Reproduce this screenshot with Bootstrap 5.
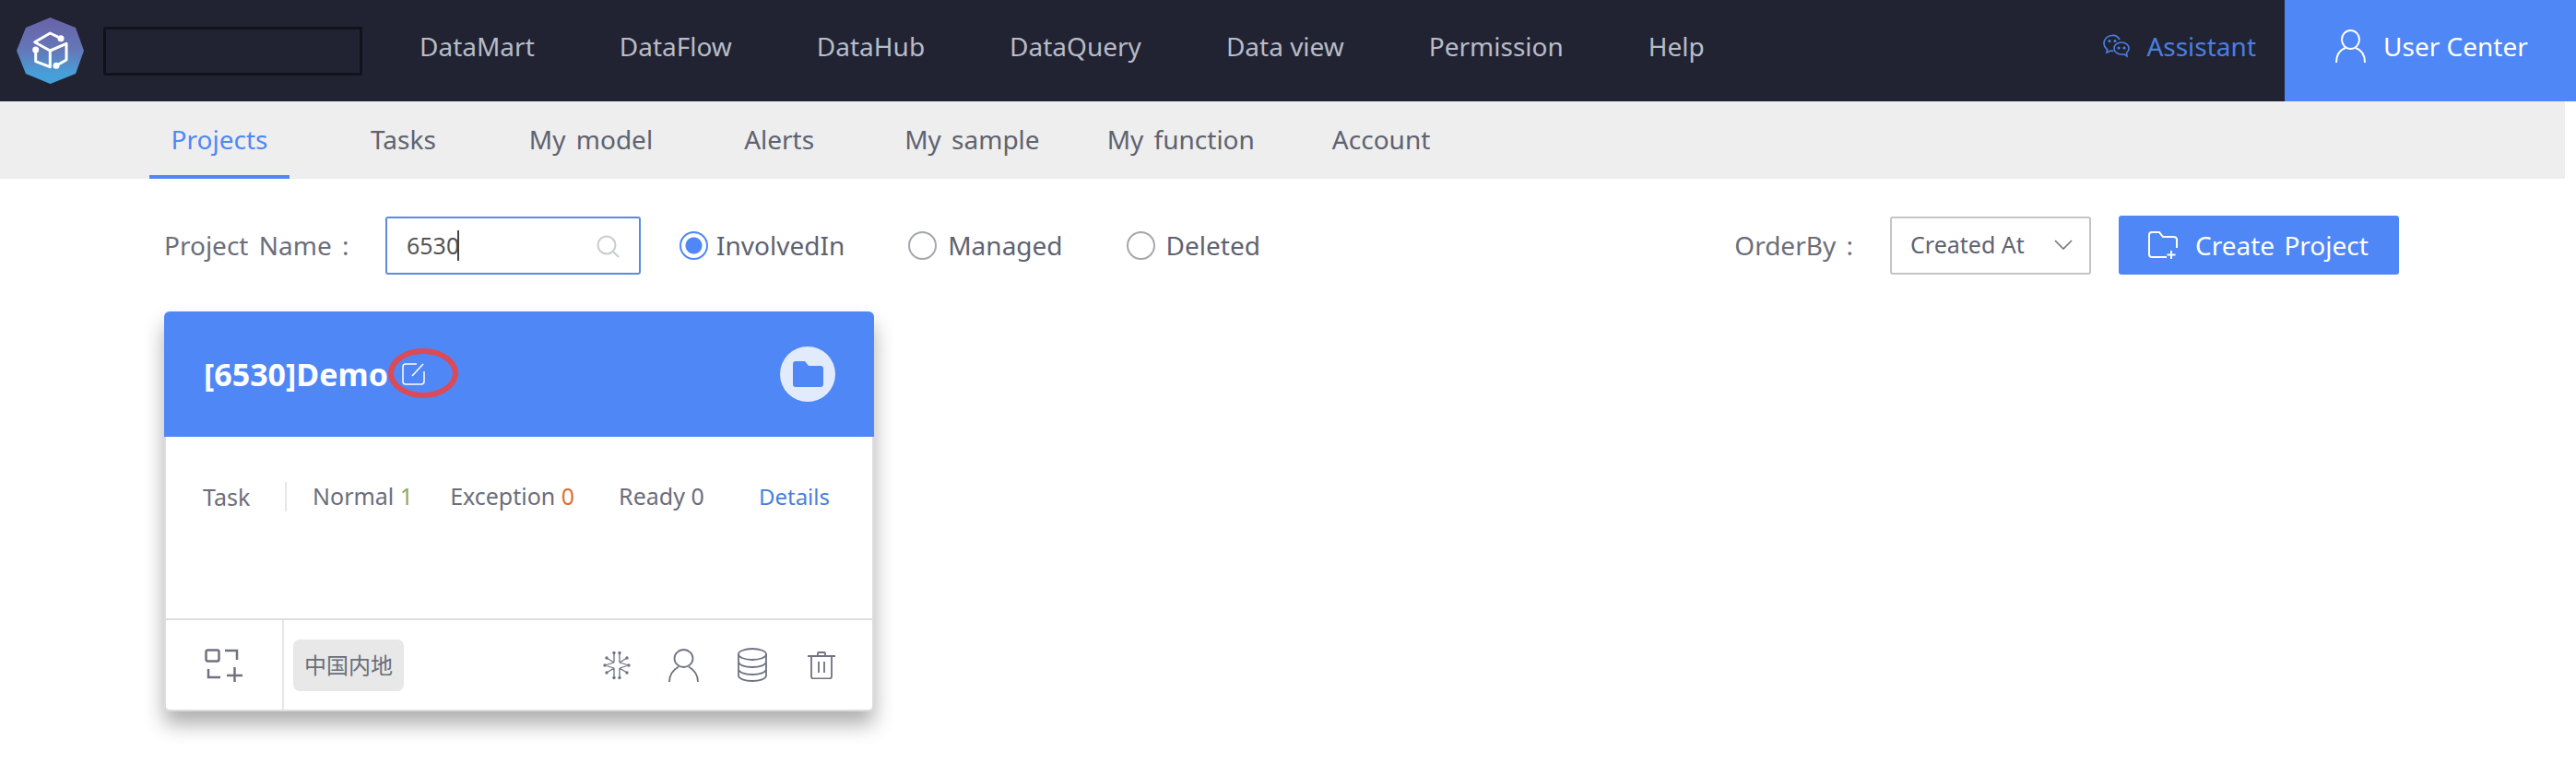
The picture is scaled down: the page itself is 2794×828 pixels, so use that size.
<!DOCTYPE html>
<html lang="en">
    <head>
        <meta charset="UTF-8">
        <title>Projects</title>
        <link href="https://cdn.jsdelivr.net/npm/bootstrap@5.3.3/dist/css/bootstrap.min.css" rel="stylesheet">
        <style>
            html, body { min-height: 100%; }
            body { font-family: "Noto Sans", "Noto Sans CJK SC", sans-serif; font-size: 28px; color: #6b6e7a; background: #fff; padding-bottom: 56px; }
            svg { display: block; flex: none; }

            .top-bar { height: 110px; background: #212332; }
            .logo-wrap { margin-left: 18px; }
            .logo-mask { width: 281px; height: 53px; margin-left: 21px; border: 3px solid #11121c; border-radius: 2px; }
            .main-menu { margin-left: 62px; margin-bottom: 10px; gap: 92px; }
            .main-menu .nav-link { padding: 0; color: #b8bcc8; font-size: 28px; }
            .assistant-link { color: #4a7fe0; font-size: 28px; margin-right: 31px; margin-bottom: 10px; gap: 18px; text-decoration: none; }
            .user-center { width: 316px; background: #4f87f7; color: #fff; font-size: 28px; gap: 19px; padding: 0 0 10px 55px; text-decoration: none; }

            .sub-bar { width: 2782px; height: 84px; background: #eee; padding-left: 162px; word-spacing: 4px; }
            .sub-bar .nav-link { height: 84px; padding: 20px 0 0; color: #5f6270; font-size: 28px; border-bottom: 4px solid transparent; }
            .sub-bar .nav-link.active { width: 152px; color: #4f87f7; border-bottom-color: #4f87f7; text-align: center; }
            .sub-bar .nav-item:nth-child(2) { margin-left: 88px; }
            .sub-bar .nav-item:nth-child(3) { margin-left: 101px; }
            .sub-bar .nav-item:nth-child(4) { margin-left: 99px; }
            .sub-bar .nav-item:nth-child(5) { margin-left: 98px; }
            .sub-bar .nav-item:nth-child(6) { margin-left: 73px; }
            .sub-bar .nav-item:nth-child(7) { margin-left: 84px; }

            .tool-row { height: 64px; margin-top: 40px; padding: 0 192px 0 178px; }
            .tool-label { word-spacing: 4px; }
            .name-label { width: 240px; }
            .search-wrap { width: 277px; height: 63px; }
            .search-input { height: 63px; padding: 0 60px 0 21px; font-size: 25px; color: #555; border: 2px solid #5b8be0; border-radius: 3px; box-shadow: none; }
            .search-icon { position: absolute; right: 23px; top: 20px; }
            .search-caret { position: absolute; left: 78px; top: 15px; width: 2px; height: 33px; background: #444; }
            .radio-item { margin: 0; padding: 0; gap: 12px; min-height: 0; font-size: 28px; color: #5f6270; }
            .radio-item .form-check-input { float: none; margin: 0; width: 31px; height: 31px; border: 2px solid #a5a7ad; background-color: #fff; }
            .radio-item .form-check-input:checked { border-color: #4f87f7; background-color: #fff; background-image: radial-gradient(circle, #4f87f7 0 8.5px, #fff 9.5px); }
            .radio-item .form-check-label { line-height: 1; }
            .radio-first { margin-left: 42px; gap: 9px; }
            .radio-second { margin-left: 69px; }
            .order-select { width: 218px; height: 63px; margin-left: 40px; padding: 0 0 0 20px; font-size: 25px; color: #5f6270; border: 2px solid #c4c4c6; border-radius: 3px; background-size: 20px 12px; background-position: right 18px center; background-image: url("data:image/svg+xml,%3csvg xmlns='http://www.w3.org/2000/svg' viewBox='0 0 20 12'%3e%3cpath fill='none' stroke='%23777' stroke-width='1.6' d='M1 1l9 9 9-9'/%3e%3c/svg%3e"); }
            .create-btn { width: 304px; height: 64px; margin-left: 30px; padding: 0 0 0 32px; gap: 19px; font-size: 28px; word-spacing: 3px; color: #fff; background: #4f87f7; border: 0; border-radius: 3px; }

            .project-card { width: 770px; height: 434px; margin: 40px 0 0 178px; border: 2px solid #ddd; border-top: 0; border-radius: 6px; box-shadow: 0 14px 22px rgba(0, 0, 0, .32); }
            .project-head { height: 136px; margin: 0 -2px; padding: 0 42px 0 43px; background: #4f87f7; border: 0; border-radius: 6px 6px 0 0 !important; }
            .project-title { font-size: 34px; font-weight: 700; color: #fff; margin: 0; line-height: 1; }
            .edit-mark { margin-left: 15px; }
            .edit-ring { position: absolute; left: 243px; top: 40px; width: 76px; height: 54px; border: 6px solid #dc4a55; border-radius: 50%; }
            .folder-disc { width: 60px; height: 60px; border-radius: 50%; background: #e2ebfb; }
            .project-body { height: 197px; padding: 46px 46px 0 40px; font-size: 25px; color: #6b6e7a; }
            .task-name { width: 91px; height: 32px; border-right: 2px solid #e6e6e6; line-height: 32px; }
            .stat-normal { margin-left: 28px; }
            .stat-exception { margin-left: 40px; }
            .stat-ready { margin-left: 48px; }
            .details-link { color: #4a7fd8; font-size: 24px; text-decoration: none; }
            .num-ok { color: #8ea86a; }
            .num-bad { color: #d9722f; }
            .project-foot { height: 99px; padding: 0; background: #fff; border-top: 2px solid #ddd; border-radius: 0 0 6px 6px !important; }
            .add-cell { width: 128px; border-right: 2px solid #e6e6e6; }
            .region-tag { width: 120px; height: 56px; margin-left: 10px; background: #e8e8e8; border-radius: 7px; font-size: 24px; color: #6b6e7a; }
            .foot-icons { margin-left: auto; padding-right: 40px; }
            .foot-icons svg:nth-child(1) { margin-right: 41px; }
            .foot-icons svg:nth-child(2) { margin-right: 42px; }
            .foot-icons svg:nth-child(3) { margin-right: 44px; }
        </style>
    </head>
    <body>
        <header class="top-bar d-flex align-items-center">
            <div class="logo-wrap">
                <svg width="73" height="72" viewBox="0 0 73 72">
                    <defs>
                        <linearGradient id="logoFill" x1="0" y1="0" x2="0" y2="1">
                            <stop offset="0" stop-color="#6a62a8"/>
                            <stop offset=".5" stop-color="#6478b8"/>
                            <stop offset=".85" stop-color="#479fd9"/>
                            <stop offset="1" stop-color="#45a0d8"/>
                        </linearGradient>
                    </defs>
                    <path fill="url(#logoFill)" d="M36.500 0 64 11 73 36 64 61 36.500 72 10 61 0 36 10 11Z"/>
                    <path fill="none" stroke="#fff" stroke-width="3" stroke-linecap="round" stroke-linejoin="round" d="M48 22.700 36.300 17 19.700 26.700 36.300 36 54 28.300V46L43 52.300M36.300 36V53.700L20.700 47.700V35"/>
                    <circle cx="48" cy="22.700" r="3.500" fill="#fff"/>
                    <circle cx="20.700" cy="35" r="3.500" fill="#fff"/>
                    <circle cx="43" cy="52.300" r="3.500" fill="#fff"/>
                </svg>
            </div>
            <div class="logo-mask"></div>
            <ul class="nav main-menu">
                <li class="nav-item"><a class="nav-link" href="#">DataMart</a></li>
                <li class="nav-item"><a class="nav-link" href="#">DataFlow</a></li>
                <li class="nav-item"><a class="nav-link" href="#">DataHub</a></li>
                <li class="nav-item"><a class="nav-link" href="#">DataQuery</a></li>
                <li class="nav-item"><a class="nav-link" href="#">Data view</a></li>
                <li class="nav-item"><a class="nav-link" href="#">Permission</a></li>
                <li class="nav-item"><a class="nav-link" href="#">Help</a></li>
            </ul>
            <a class="assistant-link d-flex align-items-center ms-auto" href="#">
                <svg width="29" height="26" viewBox="0 0 29 26" fill="none" stroke="#4a7fe0" stroke-width="1.600">
                    <path d="M18 6C16 2.500 12.500 1 9.500 1.500 4.500 2 1 5.500 1 10c0 3 1.500 5 3.500 6.500L4 20l4-2c1.200.3 2.200.4 3.500.3"/>
                    <path d="M20 9c4.500 0 8 3 8 6.500 0 2-1 3.600-2.500 4.800l.5 3.700-3.500-2.200c-.8.2-1.700.2-2.500.2-4.500 0-8-3-8-6.500S15.500 9 20 9Z"/>
                    <circle cx="7" cy="7.500" r=".8" fill="#4a7fe0"/>
                    <circle cx="13" cy="7.500" r=".8" fill="#4a7fe0"/>
                    <circle cx="17" cy="15" r=".8" fill="#4a7fe0"/>
                    <circle cx="23" cy="15" r=".8" fill="#4a7fe0"/>
                </svg>
                <span>Assistant</span>
            </a>
            <a class="user-center d-flex align-items-center h-100" href="#">
                <svg width="33" height="36" viewBox="0 0 33 36" fill="none" stroke="#fff" stroke-width="2">
                    <ellipse cx="16.500" cy="11" rx="9.500" ry="10"/>
                    <path d="M1 36C1 27 5 22 11 20M32 36C32 27 28 22 22 20"/>
                </svg>
                <span>User Center</span>
            </a>
        </header>

        <ul class="nav sub-bar">
            <li class="nav-item"><a class="nav-link active" href="#">Projects</a></li>
            <li class="nav-item"><a class="nav-link" href="#">Tasks</a></li>
            <li class="nav-item"><a class="nav-link" href="#">My model</a></li>
            <li class="nav-item"><a class="nav-link" href="#">Alerts</a></li>
            <li class="nav-item"><a class="nav-link" href="#">My sample</a></li>
            <li class="nav-item"><a class="nav-link" href="#">My function</a></li>
            <li class="nav-item"><a class="nav-link" href="#">Account</a></li>
        </ul>

        <div class="tool-row d-flex align-items-center">
            <label class="tool-label name-label" for="projectName">Project Name :</label>
            <div class="search-wrap position-relative">
                <input type="text" class="form-control search-input" id="projectName" value="6530">
                <span class="search-caret"></span>
                <svg class="search-icon" width="25" height="25" viewBox="0 0 25 25" fill="none" stroke="#c9cbcf" stroke-width="2">
                    <circle cx="11" cy="11" r="9.500"/>
                    <path d="M18 18l6 6"/>
                </svg>
            </div>
            <div class="form-check radio-item radio-first d-flex align-items-center">
                <input class="form-check-input" type="radio" name="scope" id="scopeInvolved" checked>
                <label class="form-check-label" for="scopeInvolved">InvolvedIn</label>
            </div>
            <div class="form-check radio-item radio-second d-flex align-items-center">
                <input class="form-check-input" type="radio" name="scope" id="scopeManaged">
                <label class="form-check-label" for="scopeManaged">Managed</label>
            </div>
            <div class="form-check radio-item radio-second d-flex align-items-center">
                <input class="form-check-input" type="radio" name="scope" id="scopeDeleted">
                <label class="form-check-label" for="scopeDeleted">Deleted</label>
            </div>
            <label class="tool-label ms-auto" for="orderBy">OrderBy :</label>
            <select class="form-select order-select" id="orderBy">
                <option>Created At</option>
            </select>
            <button type="button" class="btn create-btn d-flex align-items-center">
                <svg width="32" height="30" viewBox="0 0 32 30" fill="none" stroke="#fff" stroke-width="2">
                    <path d="M20 28H4c-2 0-3-1-3-3V4c0-2 1-3 3-3h8l4 5h11c2 0 4 1 4 3v9"/>
                    <path d="M25 21v9M20.500 25.500h9"/>
                </svg>
                <span>Create Project</span>
            </button>
        </div>

        <div class="card project-card">
            <div class="card-header project-head d-flex align-items-center position-relative">
                <h5 class="project-title">[6530]Demo</h5>
                <svg class="edit-mark" width="25" height="24" viewBox="0 0 25 24" fill="none" stroke="#fff" stroke-width="1.500">
                    <path d="M16 1H4C2 1 1 2 1 4v16c0 2 1 3 3 3h17c2 0 3-1 3-3V9"/>
                    <path d="M11 14 23 1"/>
                </svg>
                <span class="edit-ring"></span>
                <span class="folder-disc d-flex align-items-center justify-content-center ms-auto">
                    <svg width="33" height="28" viewBox="0 0 33 28">
                        <path fill="#4f87f7" d="M3 0h10l4 5h13c2 0 3 1 3 3v17c0 2-1 3-3 3H3c-2 0-3-1-3-3V3c0-2 1-3 3-3Z"/>
                    </svg>
                </span>
            </div>
            <div class="card-body project-body">
                <div class="d-flex align-items-center">
                    <span class="task-name">Task</span>
                    <span class="stat-normal">Normal <span class="num-ok">1</span></span>
                    <span class="stat-exception">Exception <span class="num-bad">0</span></span>
                    <span class="stat-ready">Ready 0</span>
                    <a class="details-link ms-auto" href="#">Details</a>
                </div>
            </div>
            <div class="card-footer project-foot d-flex align-items-center">
                <div class="add-cell h-100 d-flex align-items-center justify-content-center">
                    <svg width="42" height="36" viewBox="0 0 42 36" fill="none" stroke="#6f7280" stroke-width="2.500">
                        <rect x="1.500" y="1.500" width="14" height="12" rx="2"/>
                        <path d="M22 2h13v10M4 22v9h13M24 29h17M32.500 20v16"/>
                    </svg>
                </div>
                <span class="region-tag d-flex align-items-center justify-content-center">中国内地</span>
                <div class="foot-icons d-flex align-items-center">
                    <svg width="30" height="32" viewBox="0 0 30 32" fill="none" stroke="#6f7280" stroke-width="1.300">
                        <path d="M12 2v11M18 2v11M12 19v11M18 19v11M12 13 4 8M18 13l8-5M12 19l-8 5M18 19l8 5M2 16l10-3M2 16l10 3M28 16l-10-3M28 16l-10 3"/>
                        <g fill="#6f7280" stroke="none">
                            <circle cx="12" cy="2.500" r="1.700"/>
                            <circle cx="18" cy="2.500" r="1.700"/>
                            <circle cx="12" cy="29.500" r="1.700"/>
                            <circle cx="18" cy="29.500" r="1.700"/>
                            <circle cx="4" cy="8" r="1.700"/>
                            <circle cx="26" cy="8" r="1.700"/>
                            <circle cx="4" cy="24" r="1.700"/>
                            <circle cx="26" cy="24" r="1.700"/>
                            <circle cx="2" cy="16" r="1.700"/>
                            <circle cx="28" cy="16" r="1.700"/>
                        </g>
                    </svg>
                    <svg width="33" height="36" viewBox="0 0 33 36" fill="none" stroke="#6f7280" stroke-width="1.800">
                        <ellipse cx="16.500" cy="10.500" rx="10" ry="9.500"/>
                        <path d="M1 36C1 28 5 23 11 19.500M32 36C32 28 28 23 22 19.500"/>
                    </svg>
                    <svg width="32" height="37" viewBox="0 0 32 37" fill="none" stroke="#6f7280" stroke-width="1.800">
                        <ellipse cx="16" cy="7" rx="15" ry="6"/>
                        <path d="M1 7v23c0 3.500 6.700 6 15 6s15-2.500 15-6V7M1 15c0 3.500 6.700 6 15 6s15-2.500 15-6M1 23c0 3.500 6.700 6 15 6s15-2.500 15-6"/>
                    </svg>
                    <svg width="30" height="30" viewBox="0 0 30 30" fill="none" stroke="#6f7280" stroke-width="1.800">
                        <path d="M0 5h30M11 5V2c0-.700.400-1 1-1h6c.600 0 1 .300 1 1v3M4 5v22c0 1.500 1 2.500 2.500 2.500h17c1.500 0 2.500-1 2.500-2.500V5M12 11v12M18 11v12"/>
                    </svg>
                </div>
            </div>
        </div>
    </body>
</html>
